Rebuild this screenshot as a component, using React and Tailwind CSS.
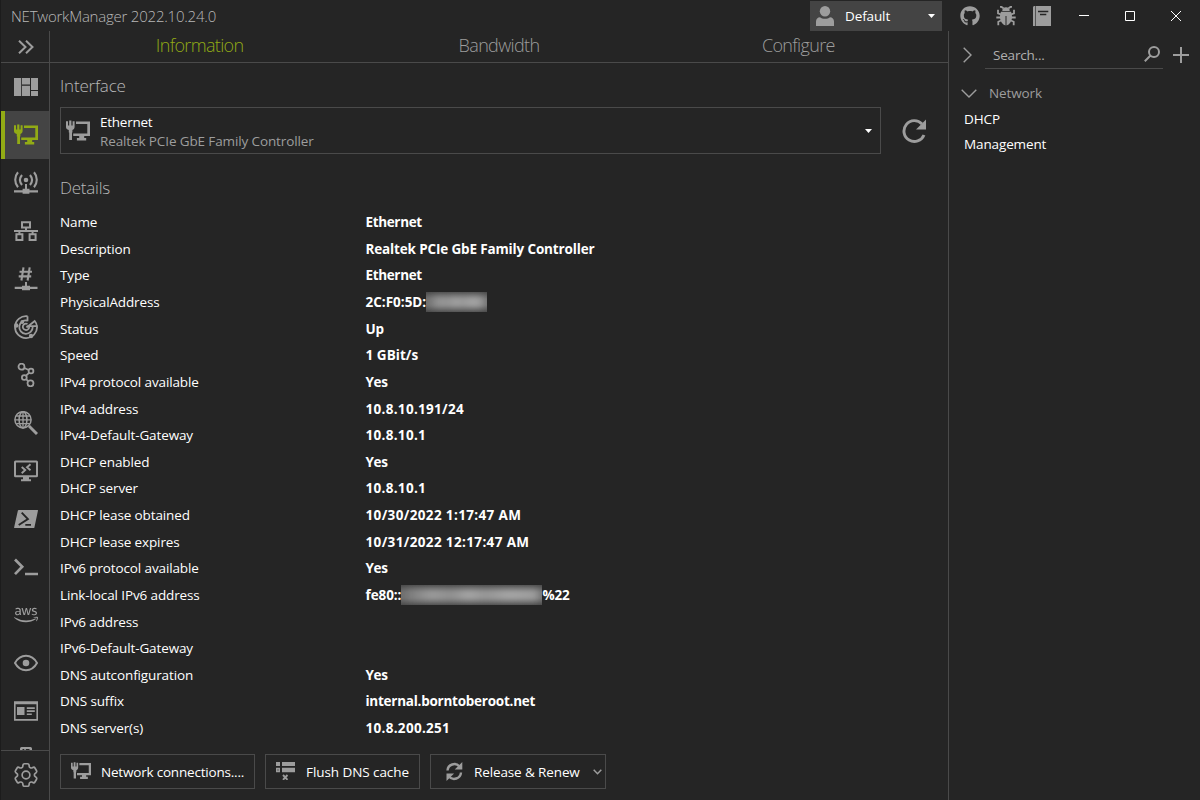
import React from "react";
import { FaGithub, FaAws } from "react-icons/fa";

function Svg({ className = "size-6", children, box = "0 0 24 24" }) {
  return (
    <svg viewBox={box} className={`${className} shrink-0`} fill="currentColor">
      {children}
    </svg>
  );
}

const Dashboard = () => (
  <Svg>
    <path d="M0 3h7.2v18H0zM8 3h8v6.5H8zM8 10.7h8V21H8zM17 3h7v12h-7zM17 16h7v5h-7z" />
  </Svg>
);

const Ethernet = ({ className }) => (
  <Svg className={className}>
    <path d="M0 2.200h2v4.300h1.200V1.500h2.200v5h1.200V2.200h2v5.900c0 1.500-1 2.600-2.200 3V13.500h-.4V21H3.200v-7.500h-.4v-2.400C1 10.600 0 9.600 0 8.100z" />
    <path d="M10 2.500h14v14.500H7.200v-2.500h14.100V5.100H10zM13.200 16.500h5v2.500h2v2.500h-9.300v-2.500h2.300z" />
  </Svg>
);

const Wireless = () => (
  <Svg>
    <circle cx="12" cy="9" r="2.300" />
    <g fill="none" stroke="currentColor" strokeWidth="2.100">
      <path d="M4 1.300C.3 5.500.3 12 4 16.300M20 1.300c3.700 4.200 3.700 10.700 0 15M8 4c-2.500 3-2.500 7 0 10M16 4c2.500 3 2.500 7 0 10" />
    </g>
    <path d="M11 13h2v4.700h2.500v1.500H24v2.300h-8.600v1.300H8.600v-1.300H0v-2.300h8.600v-1.500H11z" />
  </Svg>
);

const Subnet = () => (
  <Svg>
    <g fill="none" stroke="currentColor" strokeWidth="2">
      <path d="M8 3.200h8v5.200H8zM2.400 15.300h6v5.700h-6zM15.600 15.300h6V21h-6zM12 8.400v3.200M0 12h24M5.400 12v3M18.600 12v3" />
    </g>
  </Svg>
);

const HashNet = () => (
  <Svg>
    <path
      d="M9.500.3 7.400 13.500M15.700.3 13.600 13.500M5.500 4.700h12.500M4.700 9.400h12.500"
      fill="none"
      stroke="currentColor"
      strokeWidth="2.100"
    />
    <path d="M11 15h2v3.700h3v1H23.500v2.400H16v1.100H8v-1.100H.7v-2.400H8v-1h3z" />
  </Svg>
);

const Radar = () => (
  <Svg>
    <g fill="none" stroke="currentColor" strokeWidth="1.800">
      <path d="M13.500 1.200A11 11 0 1 0 23 11.200h-9.500L12.500 12.500M13.500 1.200v5M22.900 11.200a9 9 0 0 0-2.200-5.200l-7.500 6" />
      <path d="M13.500 5.600A6.700 6.700 0 1 0 18.700 12" />
      <path d="M13.500 9a3.200 3.200 0 1 0 1.700 3" />
    </g>
    <circle cx="2.300" cy="10.500" r="2.200" />
    <circle cx="8.300" cy="7" r="1.900" />
    <circle cx="17" cy="21" r="2.200" />
  </Svg>
);

const Route = () => (
  <Svg>
    <g fill="none" stroke="currentColor" strokeWidth="1.800">
      <circle cx="7.500" cy="3.700" r="3" />
      <circle cx="17" cy="8" r="2.400" />
      <circle cx="10.300" cy="14.500" r="2.400" />
      <circle cx="16.500" cy="20.300" r="3" />
      <path d="m10.300 5 4.500 2M15.200 9.700l-3.100 3M12.100 16.200l2 1.900" />
    </g>
  </Svg>
);

const GlobeSearch = () => (
  <Svg>
    <g fill="none" stroke="currentColor" strokeWidth="1.500">
      <circle cx="9" cy="8.800" r="8.100" />
      <ellipse cx="9" cy="8.800" rx="3.900" ry="8.100" />
      <path d="M1 8.800h16M2.200 5h13.600M2.200 12.700h13.600M9 .7v16" strokeWidth="1.300" />
      <path d="m15 15 8 8" strokeWidth="2.900" />
    </g>
  </Svg>
);

const Remote = () => (
  <Svg>
    <path d="M1.500 1.500h21a1.500 1.500 0 0 1 1.500 1.500v13.700a1.500 1.500 0 0 1-1.500 1.500H15v2.100h2v2H7v-2h2v-2.100H1.500A1.500 1.500 0 0 1 0 16.700V3a1.500 1.500 0 0 1 1.500-1.500zM2 3.500v12.700h20V3.500z" fillRule="evenodd" />
    <path d="m7.700 8 3.500 3-3.500 3.200M16.500 5.200 13 8.300l3.500 3" fill="none" stroke="currentColor" strokeWidth="1.900" />
  </Svg>
);

const PowerShell = () => (
  <Svg>
    <path d="M4.800 3H23.500a.5.5 0 0 1 .5.600L20.400 20.500a.8.800 0 0 1-.8.600H.7a.6.600 0 0 1-.6-.7L3.900 3.600A.9.900 0 0 1 4.800 3z" />
    <path d="m7.700 5.700 6.200 6.300-9.200 6M11.300 17.900h5.700" fill="none" stroke="#252525" strokeWidth="1.900" />
  </Svg>
);

const Terminal = () => (
  <Svg>
    <path d="m1 4.500 7.200 7.300L1 19.100M11 19h13" fill="none" stroke="currentColor" strokeWidth="2.700" />
  </Svg>
);

const Eye = () => (
  <Svg>
    <path
      d="M1 12c2.600-4.700 6.300-7.200 11-7.200S20.400 7.300 23 12c-2.600 4.700-6.300 7.200-11 7.200S3.600 16.700 1 12z"
      fill="none"
      stroke="currentColor"
      strokeWidth="2"
    />
    <circle cx="12" cy="12" r="3.300" />
  </Svg>
);

const Card = () => (
  <Svg>
    <path d="M0 2.300h24v19.400H0zM1.600 5.200v14.900h20.800V5.200z" fillRule="evenodd" />
    <path d="M3 8h7.500v8H3zM12.800 8.200h8V10h-8zM12.800 11.300h8v1.700h-8zM12.800 14.400h5V16h-5z" />
  </Svg>
);

const Server = () => (
  <Svg>
    <path d="M7.500 0h9A1.500 1.500 0 0 1 18 1.500V24H6V1.500A1.500 1.500 0 0 1 7.500 0zM8.500 2v1.300h1.800V2zM11.800 2v1.300h3.700V2z" fillRule="evenodd" />
  </Svg>
);

const Gear = () => (
  <svg viewBox="0 0 24 24" className="size-[30px] shrink-0" fill="none" stroke="currentColor" strokeWidth="1.350">
    <path d="M9.594 3.94c.09-.542.56-.94 1.11-.94h2.593c.55 0 1.02.398 1.11.94l.213 1.281c.063.374.313.686.645.87.074.04.147.083.22.127.325.196.72.257 1.075.124l1.217-.456a1.125 1.125 0 0 1 1.37.49l1.296 2.247a1.125 1.125 0 0 1-.26 1.431l-1.003.827c-.293.241-.438.613-.43.992a7.723 7.723 0 0 1 0 .255c-.008.378.137.75.43.991l1.004.827c.424.35.534.955.26 1.43l-1.298 2.247a1.125 1.125 0 0 1-1.369.491l-1.217-.456c-.355-.133-.75-.072-1.076.124a6.47 6.47 0 0 1-.22.128c-.331.183-.581.495-.644.869l-.213 1.281c-.09.543-.56.94-1.11.94h-2.594c-.55 0-1.019-.398-1.11-.94l-.213-1.281c-.062-.374-.312-.686-.644-.87a6.52 6.52 0 0 1-.22-.127c-.325-.196-.72-.257-1.076-.124l-1.217.456a1.125 1.125 0 0 1-1.369-.49l-1.297-2.247a1.125 1.125 0 0 1 .26-1.431l1.004-.827c.292-.24.437-.613.43-.991a6.932 6.932 0 0 1 0-.255c.007-.38-.138-.751-.43-.992l-1.004-.827a1.125 1.125 0 0 1-.26-1.43l1.297-2.247a1.125 1.125 0 0 1 1.37-.491l1.216.456c.356.133.751.072 1.076-.124.072-.044.146-.086.22-.128.332-.183.582-.495.644-.869l.214-1.28Z" />
    <circle cx="12" cy="12" r="3.100" />
  </svg>
);

const Bug = () => (
  <Svg className="size-5" box="0 0 20 20">
    <path d="M6.300 4.900a3.700 3.700 0 0 1 7.400 0zM5 5.800h10c.9 2 1.200 4.200.9 6.700-.4 3.300-2.300 6-5.400 6.900V10h-1v9.400c-3.100-.9-5-3.600-5.400-6.900C3.800 10 4.100 7.800 5 5.800z" />
    <path d="M7.500 2.300 5.500.9H4M12.500 2.300l2-1.400H16M5 8.500 2 7.300V3.700M15 8.500l3-1.200V3.700M5 11.500H.3M15 11.500h4.700M5 14.500l-2.700 1.300v3.500M15 14.500l2.700 1.300v3.500" fill="none" stroke="currentColor" strokeWidth="1.800" />
  </Svg>
);

const Book = () => (
  <Svg className="ml-px h-5 w-[18px]" box="0 0 18 20">
    <path d="M0 1.500C0 .6.600 0 1.500 0H2.300v20H0zM2.900 0H18v20H2.900z" />
    <path d="M5 5.500h10.300M7 8.500h6.300" stroke="#252525" strokeWidth="1.300" />
  </Svg>
);

const User = () => (
  <Svg className="h-5 w-[18px]" box="0 0 18 20">
    <circle cx="9" cy="5.200" r="5.200" />
    <path d="M0 20v-4.500c0-2.700 1.800-4.300 4-4.300 1.300 1 3 1.600 5 1.600s3.700-.6 5-1.600c2.200 0 4 1.600 4 4.300V20z" />
  </Svg>
);

const Refresh = () => (
  <Svg>
    <path d="M22 16A10.400 10.400 0 1 1 20 5" fill="none" stroke="currentColor" strokeWidth="2.900" />
    <path d="M24 .5v10h-10z" />
  </Svg>
);

const Sync = () => (
  <Svg className="size-[19px]" box="0 0 19 19">
    <g fill="none" stroke="currentColor" strokeWidth="2.400">
      <path d="M2.500 8.500A6.800 6.800 0 0 1 14.500 4.600M16 10.500A6.800 6.800 0 0 1 4 14.400" />
    </g>
    <path d="M17.300 0v7.600H9.700zM1.500 19v-7.600h7.600z" />
  </Svg>
);

const Flush = () => (
  <Svg className="h-[18px] w-[20px]" box="0 0 20 18">
    <path d="M0 0h4v4H0zM6 0h13v4H6zM0 5.800h4v4.500H0zM6 5.800h13v4.500H6z" />
    <path d="m7 13 4.500 4.800M11.500 13 7 17.800" stroke="currentColor" strokeWidth="1.900" />
    <path d="M1.500 7.500h1v1h-1z" fill="#252525" />
  </Svg>
);

const Stroke = ({ d, className, box, width = 1.3 }) => (
  <svg viewBox={box} className={`${className} shrink-0`} fill="none" stroke="currentColor" strokeWidth={width}>
    <path d={d} />
  </svg>
);

const Caret = () => (
  <Svg className="h-[4px] w-[7px] text-white" box="0 0 7 4">
    <path d="M0 0h7L3.500 4z" />
  </Svg>
);

const tools = [
  Dashboard, Ethernet, Wireless, Subnet, HashNet, Radar, Route, GlobeSearch, Remote,
  PowerShell, Terminal, () => <FaAws className="size-6" />, Eye, Card, Server,
];

const Hidden = ({ className }) => (
  <span className={`relative h-5 overflow-hidden bg-[linear-gradient(#484848,#6c6c6c_35%,#6c6c6c_65%,#484848)] ${className}`}>
    <span className="absolute inset-x-[3px] inset-y-[5px] bg-[linear-gradient(90deg,#777,#a8a8a8_20%,#989898_35%,#b5b5b5_48%,#a0a0a0_60%,#b5b5b5_78%,#a8a8a8)] blur-[4px]" />
  </span>
);

const wide = "tracking-[0.300px]";
const wider = "tracking-[0.360px]";
const tight = "tracking-[-0.350px]";

const details = [
  ["Name", "Ethernet", tight],
  ["Description", "Realtek PCIe GbE Family Controller"],
  ["Type", "Ethernet", tight],
  ["PhysicalAddress", <>2C:F0:5D:<Hidden className="w-[61px]" /></>, "tracking-[0px]"],
  ["Status", "Up"],
  ["Speed", "1 GBit/s", "tracking-[0.050px]"],
  ["IPv4 protocol available", "Yes", tight],
  ["IPv4 address", "10.8.10.191/24", wide],
  ["IPv4-Default-Gateway", "10.8.10.1", wide],
  ["DHCP enabled", "Yes", tight],
  ["DHCP server", "10.8.10.1", wide],
  ["DHCP lease obtained", "10/30/2022 1:17:47 AM", wider],
  ["DHCP lease expires", "10/31/2022 12:17:47 AM", wider],
  ["IPv6 protocol available", "Yes", tight],
  ["Link-local IPv6 address", <>fe80::<Hidden className="w-[141px]" />%22</>, "tracking-[-0.080px]"],
  ["IPv6 address", ""],
  ["IPv6-Default-Gateway", ""],
  ["DNS autconfiguration", "Yes", tight],
  ["DNS suffix", "internal.borntoberoot.net", "tracking-[-0.250px]"],
  ["DNS server(s)", "10.8.200.251", wide],
];

export default function App() {
  return (
    <div className="flex h-[800px] w-[1200px] flex-col overflow-hidden border-l border-[#1c1c1c] bg-[#252525] font-['Open_Sans','Noto_Sans',sans-serif] text-[13.5px] tracking-[-0.120px] whitespace-nowrap text-[#9d9d9d]">
      <header className="flex h-[31px] shrink-0 items-center">
        <h1 className="w-[809px] pt-px pl-[10px] text-[15px] font-light tracking-[-0.220px] text-[#b8b8b8]">NETworkManager 2022.10.24.0</h1>
        <div className="mt-px flex h-[30px] w-[132px] items-center bg-[#444] pr-[7px] pl-[6px]">
          <User />
          <span className="ml-[11px] flex-1 font-medium text-white">Default</span>
          <Caret />
        </div>
        <div className="ml-[18px] flex items-center gap-4 pt-px">
          <FaGithub className="size-5" />
          <Bug />
          <Book />
        </div>
        <div className="ml-[28px] flex items-center gap-9 pt-px text-white">
          <Stroke box="0 0 10 10" className="size-[10px]" d="M0 4.500h10" width={1} />
          <Stroke box="0 0 10 10" className="size-[10px]" d="M.5.500h9v9h-9z" width={1} />
          <Stroke box="0 0 10 10" className="size-[10px]" d="m0 0 10 10M10 0 0 10" width={1} />
        </div>
      </header>
      <div className="flex min-h-0 flex-1">
        <nav className="flex w-[49px] shrink-0 flex-col border-r border-[#4a4a4a]">
          <div className="flex h-8 shrink-0 items-center border-b border-[#4a4a4a] pl-[17px]">
            <Stroke box="0 0 16 14" className="h-[14px] w-4" d="m1 .7 6.500 6.300L1 13.300M8 .7 14.500 7 8 13.300" width={2} />
          </div>
          <div className="min-h-0 flex-1 overflow-hidden">
            {tools.map((Tool, i) => (
              <div
                key={i}
                className={
                  i === 1
                    ? "flex h-12 items-center border-l-4 border-[#92ab15] bg-[#444] pl-[9px] text-[#92ab15]"
                    : "flex h-12 items-center pl-[13px]"
                }
              >
                <Tool />
              </div>
            ))}
          </div>
          <div className="flex h-[50px] shrink-0 items-center border-t border-[#4a4a4a] pb-[2px] pl-[10px]">
            <Gear />
          </div>
        </nav>

        <main className="flex w-[899px] shrink-0 flex-col border-r border-[#4a4a4a]">
          <div className="grid h-8 shrink-0 grid-cols-3 items-center border-b border-[#4a4a4a] pb-[3px] text-center text-[18px] font-light tracking-[-0.650px]">
            <span className="text-[#92ab15]">Information</span>
            <span>Bandwidth</span>
            <span>Configure</span>
          </div>
          <div className="px-[10px]">
            <h2 className="flex h-[44px] items-center pt-px text-[17px] font-light tracking-[-0.200px] text-[#b8b8b8]">Interface</h2>
            <div className="flex items-center">
              <div className="flex h-[47px] w-[821px] items-center border border-[#4a4a4a] pr-2 pl-[5px]">
                <Ethernet />
                <div className="ml-[10px] flex-1 pt-[2px] leading-[19px]">
                  <div className="tracking-[-0.250px] text-white">Ethernet</div>
                  <div>Realtek PCIe GbE Family Controller</div>
                </div>
                <Caret />
              </div>
              <div className="ml-[21px]">
                <Refresh />
              </div>
            </div>
            <h2 className="flex h-[55px] items-center pt-[13px] text-[17px] font-light tracking-[-0.250px] text-[#b8b8b8]">Details</h2>
            <dl className="text-white">
              {details.map(([label, value, spacing]) => (
                <div key={label} className="flex h-[26.630px] items-center">
                  <dt className="w-[305.500px] tracking-[-0.120px]">{label}</dt>
                  <dd className={`flex items-center font-bold ${spacing ?? "tracking-[-0.150px]"}`}>{value}</dd>
                </div>
              ))}
            </dl>
            <div className="mt-[12.400px] flex gap-[10px] text-white">
              <button className="flex h-[35px] w-[195px] items-center border border-[#4a4a4a] pl-[10px]">
                <Ethernet className="size-5 text-[#9d9d9d]" />
                <span className="ml-[10px] pt-px tracking-[-0.200px]">Network connections....</span>
              </button>
              <button className="flex h-[35px] w-[155px] items-center border border-[#4a4a4a] pl-[10px]">
                <span className="text-[#9d9d9d]"><Flush /></span>
                <span className="ml-[10px] pt-px tracking-[-0.070px]">Flush DNS cache</span>
              </button>
              <button className="flex h-[35px] w-[176px] items-center border border-[#4a4a4a] pr-[3px] pl-[14px]">
                <span className="text-[#9d9d9d]"><Sync /></span>
                <span className="ml-[10px] flex-1 pt-px text-left">Release &amp; Renew</span>
                <span className="pt-[2px] text-[#9d9d9d]">
                  <Stroke box="0 0 9 6" className="h-[6px] w-[9px]" d="m.7.700 3.800 4 3.800-4" width={1.5} />
                </span>
              </button>
            </div>
          </div>
        </main>

        <aside className="min-w-0 flex-1 pl-[14px]">
          <div className="flex h-[38px] items-center pt-[9px]">
            <Stroke box="0 0 9 16" className="mt-px h-4 w-[9px]" d="m.7.700 7.300 7.300-7.300 7.300" width={1.4} />
            <div className="ml-[13px] flex h-[29px] w-[178px] items-center justify-between border-b border-[#4a4a4a] pr-[3px] pl-2">
              <span className="pt-[2px] tracking-[-0.200px] text-[#b0b0b0]">Search...</span>
              <Stroke box="0 0 16 16" className="mb-px size-4" d="M10 1a5 5 0 1 1 0 10A5 5 0 0 1 10 1zM6.500 9.500.8 15.200" width={2} />
            </div>
            <Stroke box="0 0 16 16" className="ml-[10px] size-4" d="M8 0v16M0 8h16" width={2} />
          </div>
          <div className="mt-[11px] flex h-[26px] items-center">
            <Stroke box="0 0 16 9" className="-ml-[2px] h-[9px] w-4" d="m.7.700 7.300 7.300 7.300-7.300" width={1.4} />
            <span className="ml-3">Network</span>
          </div>
          <div className="flex h-[26px] items-center pl-px text-white">DHCP</div>
          <div className="flex h-[25px] items-center pl-px text-white">Management</div>
        </aside>
      </div>
    </div>
  );
}
